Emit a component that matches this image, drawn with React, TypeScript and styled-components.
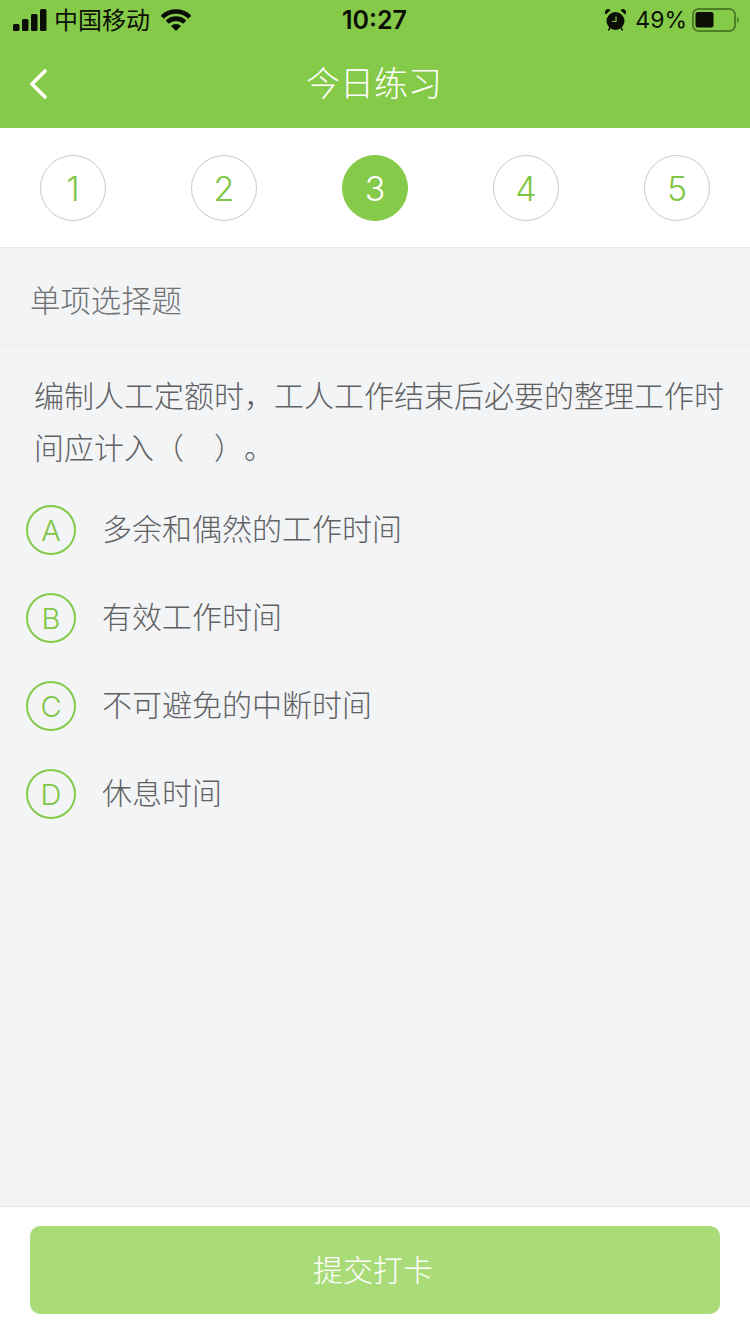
import React from "react";
import styled, { createGlobalStyle } from "styled-components";

const Global = createGlobalStyle`
  html, body { margin: 0; padding: 0; background: #f2f4f6; }
  * { box-sizing: border-box; }
  body { font-family: Inter, "Noto Sans CJK SC", sans-serif; }
`;

const Page = styled.div`
  width: 750px;
  height: 1334px;
  display: flex;
  flex-direction: column;
  background: #f2f4f6;
  overflow: hidden;
`;
const Header = styled.header`
  background: #85cb49;
  height: 128px;
  display: flex;
  flex-direction: column;
`;
const StatusBar = styled.div`
  height: 40px;
  padding: 0 11px 0 13px;
  display: grid;
  grid-template-columns: 1fr auto 1fr;
  align-items: center;
  color: #0b0f06;
`;
const StatusLeft = styled.div`
  display: flex;
  align-items: center;
`;
const Carrier = styled.span`
  font-family: "Noto Sans CJK SC", sans-serif;
  font-size: 24px;
  line-height: 40px;
  margin: -2px 11px 0 7px;
`;
const Time = styled.span`
  font-family: Inter, sans-serif;
  font-weight: 600;
  font-size: 25px;
  line-height: 40px;
  margin-right: 3px;
`;
const StatusRight = styled.div`
  display: flex;
  justify-content: flex-end;
  align-items: center;
`;
const Percent = styled.span`
  font-family: Inter, sans-serif;
  font-size: 23px;
  line-height: 40px;
  margin: 0 5px 0 9px;
`;
const NavBar = styled.div`
  height: 88px;
  padding: 0 0 0 28px;
  display: flex;
  align-items: center;
  position: relative;
`;
const NavTitle = styled.h1`
  position: absolute;
  left: 0;
  right: 2px;
  top: -2px;
  margin: 0;
  text-align: center;
  color: #fff;
  font-family: "Noto Sans CJK SC", sans-serif;
  font-weight: 300;
  font-size: 34px;
  line-height: 88px;
`;
const Stepper = styled.nav`
  height: 120px;
  background: #fff;
  border-bottom: 1px solid #e9e9e9;
  padding: 27px 40px 0;
  display: flex;
  justify-content: space-between;
  align-items: flex-start;
`;
const Step = styled.div<{ $active?: boolean }>`
  width: 66px;
  height: 66px;
  border-radius: 50%;
  display: flex;
  align-items: center;
  justify-content: center;
  font-family: Inter, sans-serif;
  font-weight: 350;
  font-size: 34px;
  border: 1px solid ${(p) => (p.$active ? "#85cb49" : "#c9c9c9")};
  background: ${(p) => (p.$active ? "#85cb49" : "#fff")};
  color: ${(p) => (p.$active ? "#fff" : "#7fc646")};
`;
const SectionLabel = styled.div`
  height: 98px;
  padding: 5px 0 0 30px;
  border-bottom: 1px solid #ebedef;
  display: flex;
  align-items: center;
  color: #6f7173;
  font-family: "Noto Sans CJK SC", sans-serif;
  font-weight: 300;
  font-size: 30.4px;
`;
const Body = styled.main`
  flex: 1;
  display: flex;
  flex-direction: column;
`;
const Question = styled.p`
  margin: 22px 21px 0 34px;
  color: #5f6163;
  font-family: "Noto Sans CJK SC", sans-serif;
  font-weight: 300;
  font-size: 30px;
  line-height: 52px;
  text-spacing-trim: space-all;
`;
const Options = styled.ul`
  list-style: none;
  margin: 33px 0 0;
  padding: 0 0 0 26px;
  display: flex;
  flex-direction: column;
  gap: 38px;
`;
const Option = styled.li`
  display: flex;
  align-items: center;
  height: 50px;
`;
const Badge = styled.span`
  width: 50px;
  height: 50px;
  border-radius: 50%;
  border: 2px solid #85cb49;
  color: #7fc646;
  font-family: Inter, sans-serif;
  font-weight: 350;
  font-size: 29px;
  display: flex;
  align-items: center;
  justify-content: center;
  margin-right: 26px;
`;
const OptionText = styled.span`
  color: #5f6163;
  font-family: "Noto Sans CJK SC", sans-serif;
  font-weight: 300;
  font-size: 30px;
  margin-top: -6px;
`;
const Footer = styled.footer`
  height: 128px;
  background: #fff;
  border-top: 1px solid #e8e9eb;
  padding: 19px 30px 0;
`;
const Submit = styled.button`
  width: 690px;
  height: 88px;
  border: 0;
  border-radius: 10px;
  background: #a9dc79;
  color: #fff;
  font-family: "Noto Sans CJK SC", sans-serif;
  font-weight: 300;
  font-size: 30px;
  padding: 0 4px 4px 0;
`;

const SignalIcon = () => (
  <svg width="34" height="22" viewBox="0 0 34 22" fill="#0b0f06">
    <rect x="0" y="15" width="6.500" height="7" rx="1.500" />
    <rect x="9" y="10" width="6.500" height="12" rx="1.500" />
    <rect x="18" y="5" width="6.500" height="17" rx="1.500" />
    <rect x="27" y="0" width="6.500" height="22" rx="1.500" />
  </svg>
);
const WifiIcon = () => (
  <svg width="30" height="22" viewBox="0 0 30 22">
    <g fill="none" stroke="#0b0f06" strokeWidth="4.600">
      <path d="M1.200 8.200A19.500 19.500 0 0 1 28.800 8.200" />
      <path d="M6.200 13.200A12.500 12.500 0 0 1 23.800 13.200" />
    </g>
    <path d="M15 22 10 17A7 7 0 0 1 20 17Z" fill="#0b0f06" />
  </svg>
);
const AlarmIcon = () => (
  <svg width="21" height="22" viewBox="0 0 21 22" fill="#0b0f06">
    <circle cx="10.500" cy="12" r="9" />
    <path d="M.8 5.500 5.500 1.200A3 3 0 0 0 .8 5.500ZM20.200 5.500 15.500 1.200A3 3 0 0 1 20.200 5.500Z" />
    <path d="M5 18.500 3.500 21.500M16 18.500l1.500 3" stroke="#0b0f06" strokeWidth="1.600" />
    <path d="M11 7.500v5H7" fill="none" stroke="#85cb49" strokeWidth="1.200" />
  </svg>
);
const BatteryIcon = () => (
  <svg width="47" height="24" viewBox="0 0 47 24">
    <rect x="1" y="1" width="42" height="22" rx="5.500" fill="none" stroke="#4d7f26" strokeWidth="2" />
    <rect x="3.500" y="4" width="18" height="15.500" rx="2.500" fill="#0b0f06" />
    <path d="M45 9c1.200.5 1.800 1.500 1.800 3s-.6 2.500-1.800 3Z" fill="#4d7f26" />
  </svg>
);
const BackIcon = () => (
  <svg width="20" height="32" viewBox="0 0 20 32" fill="none" stroke="#fff" strokeWidth="3.600" strokeLinecap="round" strokeLinejoin="round">
    <path d="M17 3 4 16l13 13" />
  </svg>
);

const steps = [1, 2, 3, 4, 5];
const options = [
  ["A", "多余和偶然的工作时间"],
  ["B", "有效工作时间"],
  ["C", "不可避免的中断时间"],
  ["D", "休息时间"],
];

export default function App() {
  return (
    <Page>
      <Global />
      <Header>
        <StatusBar>
          <StatusLeft>
            <SignalIcon />
            <Carrier>中国移动</Carrier>
            <WifiIcon />
          </StatusLeft>
          <Time>10:27</Time>
          <StatusRight>
            <AlarmIcon />
            <Percent>49%</Percent>
            <BatteryIcon />
          </StatusRight>
        </StatusBar>
        <NavBar>
          <BackIcon />
          <NavTitle>今日练习</NavTitle>
        </NavBar>
      </Header>
      <Stepper>
        {steps.map((n) => (
          <Step key={n} $active={n === 3}>{n}</Step>
        ))}
      </Stepper>
      <Body>
        <SectionLabel>单项选择题</SectionLabel>
        <Question>编制人工定额时，工人工作结束后必要的整理工作时间应计入（　）。</Question>
        <Options>
          {options.map(([k, t]) => (
            <Option key={k}>
              <Badge>{k}</Badge>
              <OptionText>{t}</OptionText>
            </Option>
          ))}
        </Options>
      </Body>
      <Footer>
        <Submit>提交打卡</Submit>
      </Footer>
    </Page>
  );
}
